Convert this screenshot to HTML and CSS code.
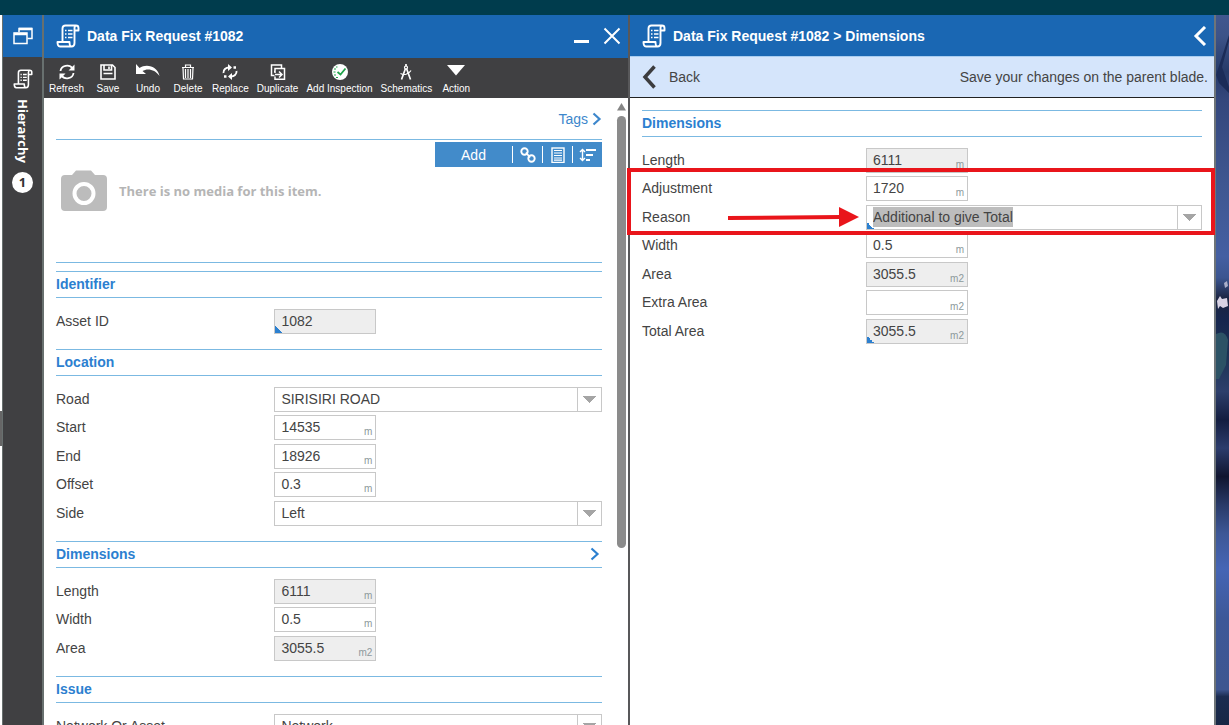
FILE: index.html
```html
<!DOCTYPE html>
<html lang="en">
<head>
<meta charset="utf-8">
<title>Data Fix Request #1082</title>
<link rel="stylesheet" href="styles.css">
</head>
<body>
<svg class="defs" aria-hidden="true">
  <symbol id="scroll" viewBox="0 0 24 24">
    <path d="M6.500 17V4.500C6.500 2.500 7.500 1.500 9.500 1.500H20C21.800 1.500 22.500 2.600 22.500 4V6.500H19M20 1.500C18.800 1.800 18.500 3 18.500 4.500V19C18.500 21.500 17.500 22.500 15.500 22.500H4C2.200 22.500 1.500 21 1.500 18H13.500C13.500 21 14 22.500 15.500 22.500" fill="none" stroke="currentColor" stroke-width="1.900" stroke-linejoin="round"/>
    <path d="M9 6.500h1.500M12 6.500h4.500M9 10h1.500M12 10h4.500M9 13.500h1.500M12 13.500h4.500" stroke="currentColor" stroke-width="1.700"/>
  </symbol>
</svg>
<div class="topbar"></div>
<div class="workspace">
  <div class="edge"></div>
  <nav class="rail">
    <button class="rail-top" aria-label="Windows">
      <svg width="20" height="18" viewBox="0 0 20 18" fill="none" stroke="currentColor"><path d="M6 5V1.500H19V11.500H14.500" stroke-width="1.500"/><path d="M6 2H19" stroke-width="2.500"/><rect x="1" y="6" width="13" height="10.500" stroke-width="1.500"/><path d="M1 7H14" stroke-width="2.500"/></svg>
    </button>
    <button class="rail-item">
      <svg width="20" height="22"><use href="#scroll"/></svg>
      <span class="rail-label">Hierarchy</span>
      <span class="count">1</span>
    </button>
  </nav>

  <section class="blade main-blade">
    <header class="blade-head">
      <svg width="24" height="26"><use href="#scroll"/></svg>
      <h1>Data Fix Request #1082</h1>
      <button aria-label="Minimise"><svg width="16" height="18" viewBox="0 0 16 18"><path d="M1 14.500H16" stroke="currentColor" stroke-width="3"/></svg></button>
      <button aria-label="Close"><svg width="18" height="18" viewBox="0 0 18 18"><path d="M1.500 1.500L16.500 16.500M16.500 1.500L1.500 16.500" stroke="currentColor" stroke-width="2"/></svg></button>
    </header>
    <div class="toolbar">
      <button><svg viewBox="0 0 16 16" fill="none" stroke="currentColor" stroke-width="1.800"><path d="M1.500 7A6.500 6 0 0 1 13.500 4.500M14.500 9A6.500 6 0 0 1 2.500 11.500"/><path d="M15.500 .500V6.500H9.500ZM.500 15.500V9.500H6.500Z" fill="currentColor" stroke="none"/></svg>Refresh</button>
      <button><svg viewBox="0 0 16 16" fill="none" stroke="currentColor" stroke-width="1.600"><path d="M1 1H12.500L15 3.500V15H1ZM4 1V6H11.500V1M3.500 9.500H12.500M9 2.500V5"/></svg>Save</button>
      <button><svg class="wide" viewBox="0 0 24 16"><path d="M0 0V10H10L6.500 7C11 4 19 5 23.500 12C22 3 11-1 3.500 4Z" fill="currentColor"/></svg>Undo</button>
      <button><svg viewBox="0 0 16 16" fill="none" stroke="currentColor" stroke-width="1.200"><path d="M2 3.500H14M5.500 3V1H10.500V3M3 4L3.500 15H12.500L13 4M5.500 5V14M8 5V14M10.500 5V14"/></svg>Delete</button>
      <button><svg viewBox="0 0 16 16" fill="none" stroke="currentColor" stroke-width="1.900"><path d="M1.500 9C1 5.500 4 3.500 7 3.500M14.500 7C15 10.500 12 12.500 9 12.500"/><path d="M6 0V7L10 3.500ZM10 9V16L6 12.500Z" fill="currentColor" stroke="none"/><path d="M11.500 3.500H14M2 12.500H4.500" stroke-width="2.500"/></svg>Replace</button>
      <button><svg viewBox="0 0 16 16" fill="none" stroke="currentColor" stroke-width="1.500"><path d="M4.500 11.500H1.500V1H11.500V4M5 9V4.500H14.500V15.200H5V12.500M4 7.500H5"/><path d="M5 10.500H11.500M9 7.500L12 10.500L9 13.500"/></svg>Duplicate</button>
      <button><svg viewBox="0 0 16 16"><circle cx="8" cy="8" r="8" fill="#fff"/><path d="M5.500 8L8.500 10.500L13.500 4.500" fill="none" stroke="#1fa34a" stroke-width="1.800"/><path d="M2 5h2M1.500 8h2M2 11h2M4 13.500h2M4 3h1.500" stroke="#1fa34a" stroke-width="1.200"/></svg>Add Inspection</button>
      <button><svg viewBox="0 0 16 16" fill="none" stroke="currentColor"><path d="M8 0V2.500M7.500 4.500L3.500 15.500M8.500 4.500L12.500 15.500" stroke-width="1.700"/><circle cx="8" cy="3.500" r="1.500" stroke-width="1.200"/><path d="M2.500 9.500C6 11.500 10.500 10.500 13 6.500" stroke-width="1.200"/></svg>Schematics</button>
      <button><svg class="wide" viewBox="0 0 24 16"><path d="M3 1H21L12 11.500Z" fill="currentColor"/></svg>Action</button>
    </div>
    <div class="scroll-area">
      <div class="content">
        <div class="tags"><a href="#">Tags <svg width="10" height="14" viewBox="0 0 10 14"><path d="M1.500 1.500L7.500 7L1.500 12.500" fill="none" stroke="currentColor" stroke-width="2.200"/></svg></a></div>
        <div class="media">
          <div class="media-tools">
            <button class="add">Add</button>
            <button aria-label="Link"><svg width="16" height="16" viewBox="0 0 16 16" fill="none" stroke="currentColor" stroke-width="1.900"><circle cx="4.500" cy="4.500" r="3.200"/><circle cx="11.500" cy="11.500" r="3.200"/><path d="M6 5.500L10 10.500"/></svg></button>
            <button aria-label="List"><svg width="14" height="16" viewBox="0 0 14 16" fill="none" stroke="currentColor"><rect x="1" y="1" width="12" height="14.500" stroke-width="1.400"/><path d="M3 3.500H11M3 6H11M3 8.500H11M3 11H11M3 13.200H11" stroke-width="1.200"/></svg></button>
            <button aria-label="Sort"><svg width="18" height="14" viewBox="0 0 18 14" fill="none" stroke="currentColor"><path d="M3.500 2V12M1 4L3.500 1.500L6 4M1 10L3.500 12.500L6 10" stroke-width="1.400"/><path d="M7 2H17M7 7H14M7 12H11" stroke-width="1.800"/></svg></button>
          </div>
          <div class="no-media">
            <svg width="48" height="42" viewBox="0 0 48 42"><path d="M5 5H12L16 .500H31L35 5H43Q47 5 47 9V37Q47 41 43 41H5Q1 41 1 37V9Q1 5 5 5Z" fill="#bcbcbc"/><circle cx="24" cy="23.500" r="9.500" fill="none" stroke="#fff" stroke-width="4"/></svg>
            <span>There is no media for this item.</span>
          </div>
        </div>
        <section class="group">
          <h2>Identifier</h2>
          <div class="fields">
            <div class="field"><label for="asset">Asset ID</label><span class="box short locked marked"><input id="asset" value="1082" readonly></span></div>
          </div>
        </section>
        <section class="group">
          <h2>Location</h2>
          <div class="fields">
            <div class="field"><label for="road">Road</label><span class="box drop"><select id="road"><option>SIRISIRI ROAD</option></select></span></div>
            <div class="field"><label for="start">Start</label><span class="box short"><input id="start" value="14535"><small>m</small></span></div>
            <div class="field"><label for="end">End</label><span class="box short"><input id="end" value="18926"><small>m</small></span></div>
            <div class="field"><label for="offset">Offset</label><span class="box short"><input id="offset" value="0.3"><small>m</small></span></div>
            <div class="field"><label for="side">Side</label><span class="box drop"><select id="side"><option>Left</option></select></span></div>
          </div>
        </section>
        <section class="group">
          <h2>Dimensions <svg width="12" height="14" viewBox="0 0 12 14"><path d="M1.500 1.500L7.500 7L1.500 12.500" fill="none" stroke="currentColor" stroke-width="2.200"/></svg></h2>
          <div class="fields">
            <div class="field"><label for="len">Length</label><span class="box short locked"><input id="len" value="6111" readonly><small>m</small></span></div>
            <div class="field"><label for="wid">Width</label><span class="box short"><input id="wid" value="0.5"><small>m</small></span></div>
            <div class="field"><label for="area">Area</label><span class="box short locked"><input id="area" value="3055.5" readonly><small>m2</small></span></div>
          </div>
        </section>
        <section class="group">
          <h2>Issue</h2>
          <div class="fields">
            <div class="field"><label for="net">Network Or Asset</label><span class="box drop"><select id="net"><option>Network</option></select></span></div>
          </div>
        </section>
      </div>
      <div class="scrollbar"><svg width="9" height="8" viewBox="0 0 9 8"><path d="M4.500 0L9 7.500H0Z" fill="#858585"/></svg><div class="track"><div class="thumb"></div></div></div>
    </div>
  </section>

  <section class="blade side-blade">
    <header class="blade-head">
      <svg width="24" height="26"><use href="#scroll"/></svg>
      <h1>Data Fix Request #1082 &gt; Dimensions</h1>
      <button aria-label="Collapse"><svg width="14" height="20" viewBox="0 0 14 20"><path d="M12 1L3 10L12 19" fill="none" stroke="currentColor" stroke-width="3"/></svg></button>
    </header>
    <div class="backbar">
      <button><svg width="16" height="24" viewBox="0 0 16 24"><path d="M13.500 1.500L4 12L13.500 22.500" fill="none" stroke="#3c3c3e" stroke-width="3.500"/></svg>Back</button>
      <span>Save your changes on the parent blade.</span>
    </div>
    <div class="content">
      <section class="group">
        <h2>Dimensions</h2>
        <div class="fields">
          <div class="field"><label for="len2">Length</label><span class="box short locked"><input id="len2" value="6111" readonly><small>m</small></span></div>
          <div class="field"><label for="adj">Adjustment</label><span class="box short"><input id="adj" value="1720"><small>m</small></span></div>
          <div class="field"><label for="reason">Reason</label><span class="box drop marked"><input id="reason" role="combobox" aria-expanded="false" value="Additional to give Total" spellcheck="false"></span></div>
          <div class="field"><label for="wid2">Width</label><span class="box short"><input id="wid2" value="0.5"><small>m</small></span></div>
          <div class="field"><label for="area2">Area</label><span class="box short locked"><input id="area2" value="3055.5" readonly><small>m2</small></span></div>
          <div class="field"><label for="extra">Extra Area</label><span class="box short"><input id="extra" value=""><small>m2</small></span></div>
          <div class="field"><label for="total">Total Area</label><span class="box short locked marked"><input id="total" value="3055.5" readonly><small>m2</small></span></div>
        </div>
      </section>
      <div class="callout"><svg width="134" height="22" viewBox="0 0 134 22"><path d="M1 12L114 11" stroke="#e9151b" stroke-width="4"/><path d="M112 1V21L132 11Z" fill="#e9151b"/></svg></div>
    </div>
  </section>
  <div class="backdrop">
    <svg viewBox="0 0 13 710" preserveAspectRatio="none" width="100%" height="100%">
      <defs><linearGradient id="sky" x1="0" y1="0" x2="0" y2="1">
        <stop offset="0" stop-color="#41578f"/><stop offset=".03" stop-color="#3c5388"/><stop offset=".08" stop-color="#263a68"/><stop offset=".12" stop-color="#34477c"/><stop offset=".24" stop-color="#3f5791"/><stop offset=".34" stop-color="#445fa2"/><stop offset=".37" stop-color="#3b5590"/><stop offset=".4" stop-color="#1b2440"/><stop offset=".43" stop-color="#16264e"/><stop offset=".48" stop-color="#1c3354"/><stop offset=".53" stop-color="#2d3f6b"/><stop offset=".57" stop-color="#131d40"/><stop offset=".61" stop-color="#2c3c6c"/><stop offset=".65" stop-color="#10152f"/><stop offset=".69" stop-color="#293a68"/><stop offset=".73" stop-color="#3d5796"/><stop offset=".78" stop-color="#4565b5"/><stop offset=".85" stop-color="#3d5898"/><stop offset=".95" stop-color="#3e5690"/><stop offset=".96" stop-color="#1b2c50"/><stop offset="1" stop-color="#182745"/>
      </linearGradient></defs>
      <rect width="13" height="710" fill="url(#sky)"/>
      <path d="M0 60L5 45L13 20V26L6 52L13 72V78L3 68Z" fill="#1b2c58"/>
      <path d="M1 286L4 281L6 284L11 283L12 291L7 293L4 291L2 294Z" fill="#d8d3e4"/>
      <path d="M8 268L11 266L12 271L9 273Z" fill="#a9aec9"/>
      <path d="M0 319Q9 314 12 325L10 350L3 364H0Z" fill="#2c5265"/>
    </svg>
  </div>
</div>
<script src="main.js"></script>
</body>
</html>
```
FILE: styles.css
```css
*, *::before, *::after { box-sizing: border-box; }
body {
  margin: 0;
  height: 100vh;
  display: flex;
  flex-direction: column;
  overflow: hidden;
  font: 14px/20px "Liberation Sans", Arial, sans-serif;
  color: #444;
  background: #fff;
}
button, input, select { font: inherit; color: inherit; }
button { border: 0; padding: 0; background: none; display: flex; align-items: center; cursor: pointer; }
.defs { position: absolute; width: 0; height: 0; }
.topbar { flex: none; height: 15px; background: #003c4d; }
.workspace { flex: 1; min-height: 0; display: flex; }
.edge { width: 2px; background: linear-gradient(#fff 396px, #666 396px, #666 431px, #fff 431px); }

.rail { width: 42px; display: flex; flex-direction: column; background: #404042; color: #fff; border: solid #68706f; border-width: 0 2px 0 1px; }
.rail-top { height: 42px; justify-content: center; background: #1a67b3; }
.rail-item { flex-direction: column; padding-top: 11px; gap: 9px; }
.rail-label { writing-mode: vertical-rl; font: bold 13px/20px "Open Sans", sans-serif; }
.count { width: 21px; height: 21px; border-radius: 50%; background: #fff; color: #333; font: bold 13px/21px "Open Sans", sans-serif; text-align: center; }

.blade { flex: 1 1 0; min-width: 0; display: flex; flex-direction: column; background: #fff; }
.main-blade { border-right: 2px solid #58585a; }
.side-blade { border-right: 2px solid #6e7478; }
.blade-head { flex: none; height: 43px; display: flex; align-items: center; gap: 14px; padding: 0 7px 2px 12px; background: #1a67b3; color: #fff; }
.blade-head h1 { flex: 1; margin: 0 0 0 -7px; font: bold 14px/20px "Liberation Sans", Arial, sans-serif; }

.toolbar { flex: none; height: 40px; display: flex; padding-left: 1px; background: #404042; color: #fff; }
.toolbar button { min-width: 40px; padding: 6px 4px 3px; flex-direction: column; justify-content: space-between; font-size: 10px; line-height: 12px; white-space: nowrap; }
.toolbar svg { width: 16px; height: 16px; }
.toolbar svg.wide { width: 24px; }

.scroll-area { flex: 1; min-height: 0; display: flex; overflow: hidden; }
.content { flex: 1; min-width: 0; padding: 0 12px; }
.tags { height: 42px; padding-top: 11px; text-align: right; border-bottom: 1px solid #7bb9e2; }
.tags a { display: inline-flex; align-items: center; gap: 4px; color: #3d87cc; text-decoration: none; }
.media { height: 123px; border-bottom: 1px solid #7bb9e2; margin-bottom: 8px; padding-top: 2px; }
.media-tools { display: flex; width: 167px; height: 25px; margin-left: auto; padding: 4px 0; background: #428bca; color: #fff; }
.media-tools button { flex: none; width: 30px; justify-content: center; border-left: 1px solid #fff; }
.media-tools .add { flex: 1; border: 0; }
.no-media { display: flex; align-items: center; gap: 11px; padding: 3px 0 0 4px; font: bold 13px/20px "Open Sans", sans-serif; color: #b5b5b5; }

.group h2 { display: flex; justify-content: space-between; align-items: center; height: 27px; margin: 0; padding-bottom: 1px; border: solid #7bb9e2; border-width: 1px 0; font: bold 14px/20px "Liberation Sans", Arial, sans-serif; color: #2c80d0; }
.fields { padding: 11px 0 12px; }
.field { display: grid; grid-template-columns: 2fr 3fr; align-items: center; padding-bottom: 3px; }
.field:nth-child(even) { padding-bottom: 4px; }
.field label { padding-bottom: 2px; }
.box { position: relative; display: flex; height: 25px; border: 1px solid #c8c8c8; background: #fff; }
.short { width: 102px; }
.locked { background: #eee; }
.box input, .box select { flex: 1; min-width: 0; width: 100%; border: 0; padding: 0 6px 2px; background: none; outline: 0; appearance: none; }
.box small { align-self: flex-end; padding-right: 3px; font-size: 10px; line-height: 14px; color: #8d999c; }
.drop::after { content: ""; flex: none; width: 24px; border-left: 1px solid #c8c8c8; background: conic-gradient(from -43deg at 50% 100%, #a5a5a5 86deg, transparent 0) center / 13px 7px no-repeat; }
.marked::before { content: ""; position: absolute; left: 0; bottom: 0; width: 7px; height: 7px; background: linear-gradient(45deg, #2c80d0 50%, transparent 50%); }
#reason { caret-color: transparent; }
#reason::selection { background: #bdbdbd; color: #444; }

.scrollbar { width: 14px; display: flex; flex-direction: column; align-items: center; gap: 5px; padding-top: 5px; }
.scrollbar svg { flex: none; }
.track { flex: 1; width: 9px; }
.thumb { height: 71%; border-radius: 5px; background: #8b8b8b; }

.side-blade .blade-head { height: 42px; border-bottom: 1px solid #a9cdf0; padding-bottom: 0; }
.backbar { flex: none; height: 41px; display: flex; align-items: center; justify-content: space-between; padding: 0 6px 0 11px; background: #d5e5fb; border-bottom: 1px solid #222; }
.backbar button { gap: 12px; }
.side-blade .content { position: relative; padding-top: 12px; }
.callout { position: absolute; left: -3px; right: -1px; top: 70px; height: 67px; border: 4px solid #e9151b; padding: 34px 0 0 96px; pointer-events: none; }
.callout svg { display: block; }
.backdrop { flex: none; width: 13px; }
.backdrop svg { display: block; }
```
FILE: main.js
```js
const reason = document.getElementById("reason");
reason.focus();
reason.select();
```
